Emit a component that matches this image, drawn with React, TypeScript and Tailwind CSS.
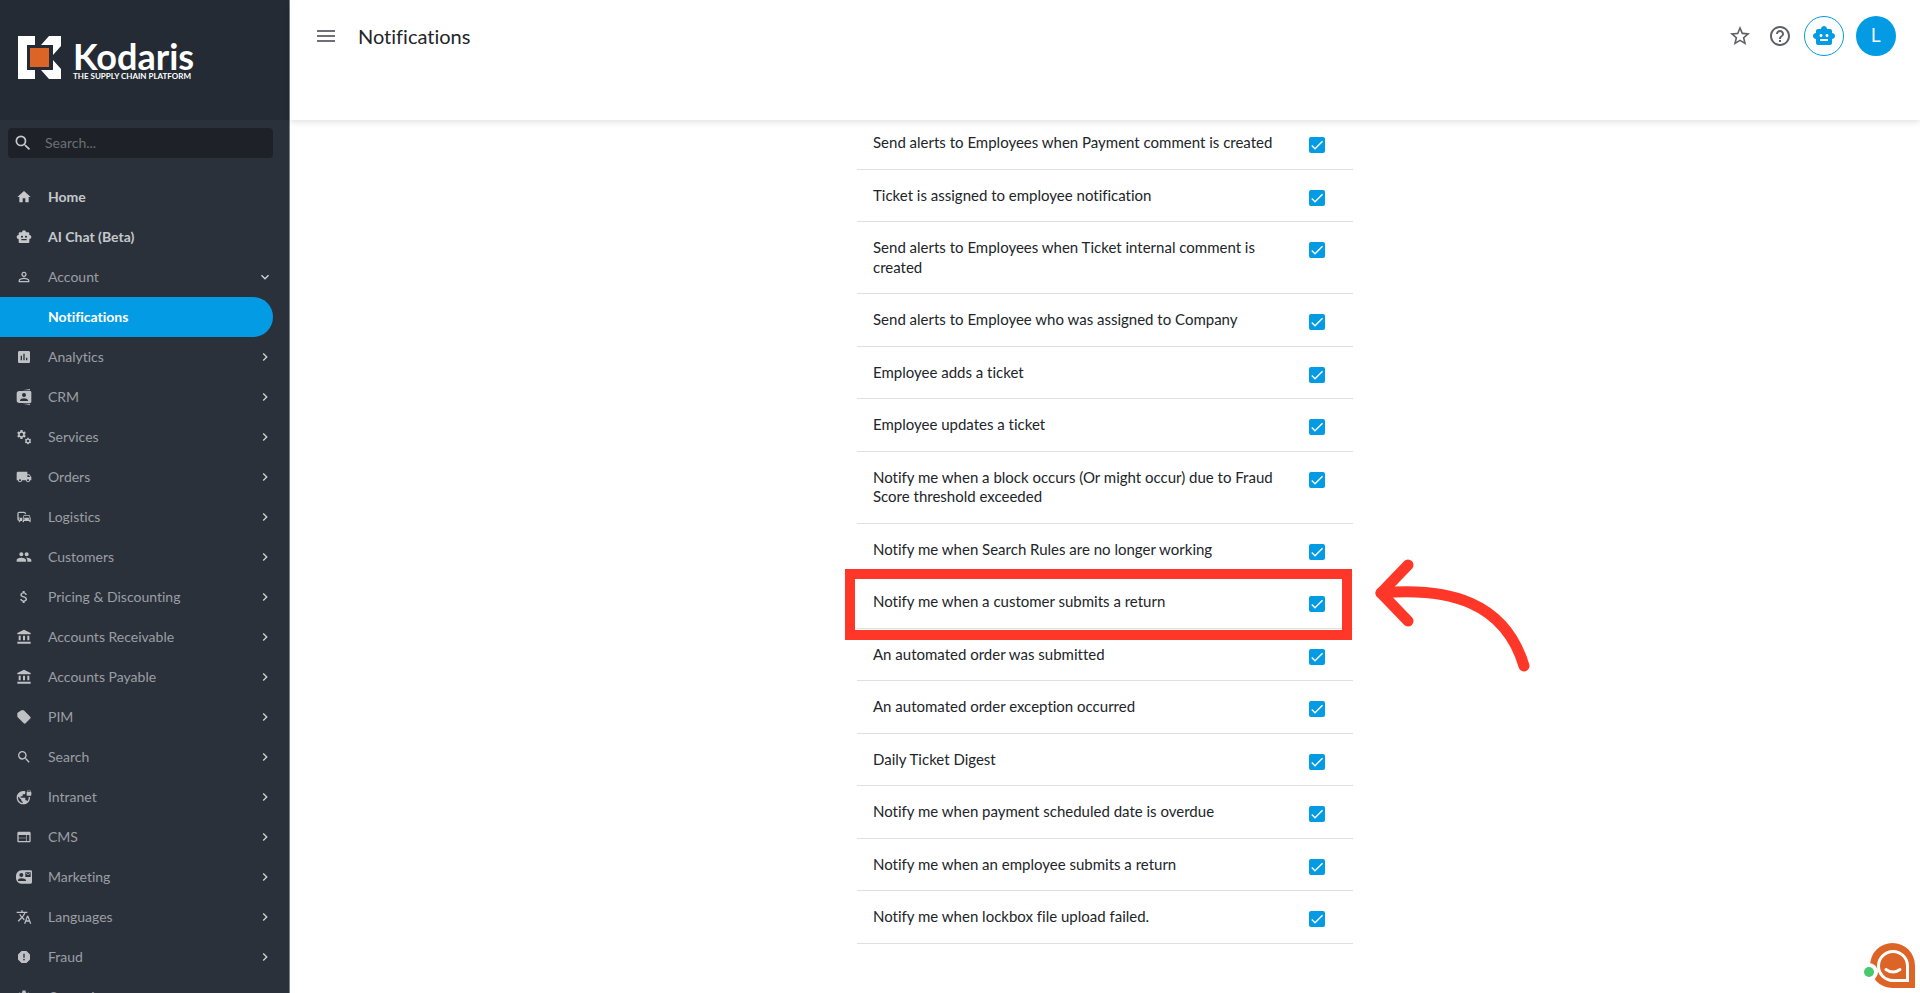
import { useState } from 'react';
import type { IconType } from 'react-icons';
import {
    MdAccountBalance,
    MdAssessment,
    MdAttachMoney,
    MdCheck,
    MdChevronRight,
    MdCommute,
    MdExpandMore,
    MdHelpOutline,
    MdHome,
    MdLocalShipping,
    MdMenu,
    MdPeople,
    MdPersonOutline,
    MdReport,
    MdSearch,
    MdSettings,
    MdSmartToy,
    MdStarBorder,
    MdTranslate,
    MdVpnLock,
    MdWeb,
} from 'react-icons/md';

const ContactCardsIcon = () => (
    <svg viewBox="0 0 24 24" width="16" height="16" fill="currentColor">
        <path d="M10 2l11-2v2zM10 22l11 2v-2z" />
        <path
            fillRule="evenodd"
            d="M5 3h16a2 2 0 0 1 2 2v14a2 2 0 0 1-2 2H5a4 4 0 0 1-4-4V7a4 4 0 0 1 4-4zM12 6a3 3 0 1 0 0 6 3 3 0 0 0 0-6zM6 18h12v-1c0-2-4-3-6-3s-6 1-6 3z"
        />
    </svg>
);

const GearsIcon = () => (
    <svg viewBox="0 0 16 16" width="16" height="16">
        <MdSettings x="0" y="0" size="11" />
        <MdSettings x="8" y="8" size="8" />
    </svg>
);

const TagIcon = () => (
    <svg viewBox="0 0 24 24" width="16" height="16" fill="currentColor">
        <path d="M21.410 11.580l-9-9C12.050 2.220 11.550 2 11 2H8L2 6v5c0 .55.22 1.050.59 1.420l9 9c.36.36.86.58 1.410.58s1.050-.22 1.410-.59l7-7c.37-.36.59-.86.59-1.410s-.23-1.060-.59-1.420z" />
    </svg>
);

const ContactMailIcon = () => (
    <svg viewBox="0 0 24 24" width="16" height="16" fill="currentColor">
        <path
            fillRule="evenodd"
            d="M8 2h14a2 2 0 0 1 2 2v16a2 2 0 0 1-2 2H8a8 8 0 0 1-8-8v-4a8 8 0 0 1 8-8zM8 6a3 3 0 1 0 0 6 3 3 0 0 0 0-6zM3 18h12v-1c0-2-4-3-7-3s-5 1-5 3zM14 5v7h8V5zM15 6l3 2 3-2v1l-3 2-3-2z"
        />
    </svg>
);

interface NavItem {
    label: string;
    icon?: IconType | (() => React.ReactElement);
    type?: 'link' | 'open' | 'active';
}

const navItems: NavItem[] = [
    { label: 'Home', icon: MdHome, type: 'link' },
    { label: 'AI Chat (Beta)', icon: MdSmartToy, type: 'link' },
    { label: 'Account', icon: MdPersonOutline, type: 'open' },
    { label: 'Notifications', type: 'active' },
    { label: 'Analytics', icon: MdAssessment },
    { label: 'CRM', icon: ContactCardsIcon },
    { label: 'Services', icon: GearsIcon },
    { label: 'Orders', icon: MdLocalShipping },
    { label: 'Logistics', icon: MdCommute },
    { label: 'Customers', icon: MdPeople },
    { label: 'Pricing & Discounting', icon: MdAttachMoney },
    { label: 'Accounts Receivable', icon: MdAccountBalance },
    { label: 'Accounts Payable', icon: MdAccountBalance },
    { label: 'PIM', icon: TagIcon },
    { label: 'Search', icon: MdSearch },
    { label: 'Intranet', icon: MdVpnLock },
    { label: 'CMS', icon: MdWeb },
    { label: 'Marketing', icon: ContactMailIcon },
    { label: 'Languages', icon: MdTranslate },
    { label: 'Fraud', icon: MdReport },
    { label: 'Operations', icon: MdSettings },
];

const HIGHLIGHTED = 'Notify me when a customer submits a return';

const notifications = [
    'Send alerts to Employees when Payment comment is created',
    'Ticket is assigned to employee notification',
    'Send alerts to Employees when Ticket internal comment is created',
    'Send alerts to Employee who was assigned to Company',
    'Employee adds a ticket',
    'Employee updates a ticket',
    'Notify me when a block occurs (Or might occur) due to Fraud Score threshold exceeded',
    'Notify me when Search Rules are no longer working',
    HIGHLIGHTED,
    'An automated order was submitted',
    'An automated order exception occurred',
    'Daily Ticket Digest',
    'Notify me when payment scheduled date is overdue',
    'Notify me when an employee submits a return',
    'Notify me when lockbox file upload failed.',
];

const Logo = () => (
    <div className="flex h-30 shrink-0 items-center bg-[#242b34] pb-[5px] pl-[18px]">
        <svg viewBox="0 0 43 43" width="43" height="43" aria-hidden="true">
            <path fill="#fff" d="M0 0h17v9H9v25h8v9H0zM31 0h12v10l-8 9V9H23zM35 24l8 9v10H31l-8-9h12z" />
            <path fill="#dc6427" d="M12 12h19v19H12z" />
        </svg>
        <div className="mt-1 ml-3 text-white">
            <div className="text-4xl leading-8 font-bold">Kodaris</div>
            <div className="text-[8px] leading-2 font-bold">THE SUPPLY CHAIN PLATFORM</div>
        </div>
    </div>
);

const SidebarItem = ({ label, icon: Icon, type }: NavItem) => {
    if (type === 'active') {
        return (
            <a href="#notifications" className="mr-4 flex h-10 items-center rounded-r-full bg-[#049be5] pl-12 text-sm font-bold text-white">
                {label}
            </a>
        );
    }
    if (type === 'link') {
        return (
            <a href="#" className="mr-4 flex h-10 items-center gap-4 pl-4 text-sm font-bold text-[#c6c8cb]">
                {Icon && <Icon size={16} />}
                {label}
            </a>
        );
    }
    return (
        <button className="mr-4 flex h-10 items-center gap-4 pl-4 text-left text-sm text-[#9b9fa4]">
            <span className="text-[#bfc1c4]">{Icon && <Icon size={16} />}</span>
            <span className="flex-1">{label}</span>
            <span className="text-[#d0d2d4]">{type === 'open' ? <MdExpandMore size={16} /> : <MdChevronRight size={16} />}</span>
        </button>
    );
};

const Sidebar = () => (
    <aside className="flex w-[290px] shrink-0 flex-col overflow-hidden border-r border-[#7d8087] bg-[#2b313b]">
        <Logo />
        <label className="mt-2 mr-4 ml-2 flex h-[30px] shrink-0 items-center gap-3 rounded bg-[#1e2228] pl-[5px]">
            <MdSearch size={20} className="text-[#c6c8cb]" />
            <input
                type="search"
                aria-label="Search"
                placeholder="Search..."
                className="min-w-0 flex-1 bg-transparent text-sm text-white placeholder-[#6b6f74] outline-none"
            />
        </label>
        <nav className="mt-[19px] flex flex-col *:shrink-0">
            {navItems.map((item) => (
                <SidebarItem key={item.label} {...item} />
            ))}
        </nav>
    </aside>
);

const Header = () => (
    <header className="z-10 flex h-30 shrink-0 items-start justify-between bg-white pt-4 pr-6 pl-6 shadow-[0_2px_6px_rgba(0,0,0,0.12)]">
        <div className="flex h-10 items-center gap-5">
            <button aria-label="Toggle menu" className="text-[#6f6f74]">
                <MdMenu size={24} />
            </button>
            <h1 className="text-xl text-[#212529]">Notifications</h1>
        </div>
        <div className="flex h-10 items-center gap-3 text-[#5f6166]">
            <button aria-label="Favorite" className="mr-1">
                <MdStarBorder size={24} />
            </button>
            <button aria-label="Help">
                <MdHelpOutline size={24} />
            </button>
            <button aria-label="AI assistant" className="flex size-10 items-center justify-center rounded-full border border-[#049be5] text-[#049be5]">
                <MdSmartToy size={24} />
            </button>
            <button aria-label="Profile" className="size-10 rounded-full bg-[#049be5] font-['Inter',sans-serif] text-lg text-white">
                L
            </button>
        </div>
    </header>
);

const NotificationRow = ({ label }: { label: string }) => {
    const [checked, setChecked] = useState(true);

    return (
        <li className="relative border-b border-[#dfdfe0]">
            <label className="flex items-start justify-between py-4 pr-7 pl-4">
                <span className="w-[410px]">{label}</span>
                <span className="mt-1 -mb-1 grid size-4">
                    <input
                        type="checkbox"
                        checked={checked}
                        onChange={() => setChecked(!checked)}
                        className="col-start-1 row-start-1 size-4 appearance-none rounded-xs border-2 border-[#049be5] checked:bg-[#049be5]"
                    />
                    {checked && <MdCheck size={16} className="pointer-events-none col-start-1 row-start-1 text-white" />}
                </span>
            </label>

            {/* Red frame and arrow over the row */}
            {label === HIGHLIGHTED && (
                <>
                    <div className="pointer-events-none absolute -top-[7px] right-px -bottom-3 -left-3 border-10 border-[#ff3729]" />
                    <svg
                        viewBox="0 0 168 124"
                        width="168"
                        height="124"
                        fill="none"
                        stroke="#ff3729"
                        strokeWidth="11"
                        strokeLinecap="round"
                        strokeLinejoin="round"
                        className="pointer-events-none absolute -top-[22px] left-full ml-4"
                    >
                        <path d="M39 11L12 39L39 67" />
                        <path d="M12 39C80 33 136 48 155 112" />
                    </svg>
                </>
            )}
        </li>
    );
};

const ChatBubble = () => (
    <button aria-label="Open chat" className="fixed right-[5px] bottom-[5px] z-20">
        <svg viewBox="0 0 51 45" width="51" height="45" fill="none">
            <path d="M28.500 0A22.500 22.500 0 0 1 51 22.500V45H28.500a22.500 22.500 0 0 1 0-45z" fill="#dc6427" />
            <path d="M29 8.500A14.500 14.500 0 0 1 43.500 23v14.500H29a14.500 14.500 0 0 1 0-29z" stroke="#fff" strokeWidth="3" />
            <path d="M22 26.500q7 5 14 0" stroke="#fff" strokeWidth="3" strokeLinecap="round" />
            <circle cx="5" cy="29" r="9" fill="#fff" />
            <circle cx="5" cy="29" r="5" fill="#48c96b" />
        </svg>
    </button>
);

const App = () => {
    return (
        <div className="flex h-screen overflow-hidden bg-white font-['Lato',sans-serif] [font-variant-ligatures:none]">
            <Sidebar />
            <div className="flex min-w-0 flex-1 flex-col">
                <Header />
                <main className="flex-1 overflow-hidden">
                    <ul className="mx-auto -mt-[3px] w-[496px] text-[15px] leading-[1.3] text-[#212529]">
                        {notifications.map((label) => (
                            <NotificationRow key={label} label={label} />
                        ))}
                    </ul>
                </main>
            </div>
            <ChatBubble />
        </div>
    );
};

export default App;
